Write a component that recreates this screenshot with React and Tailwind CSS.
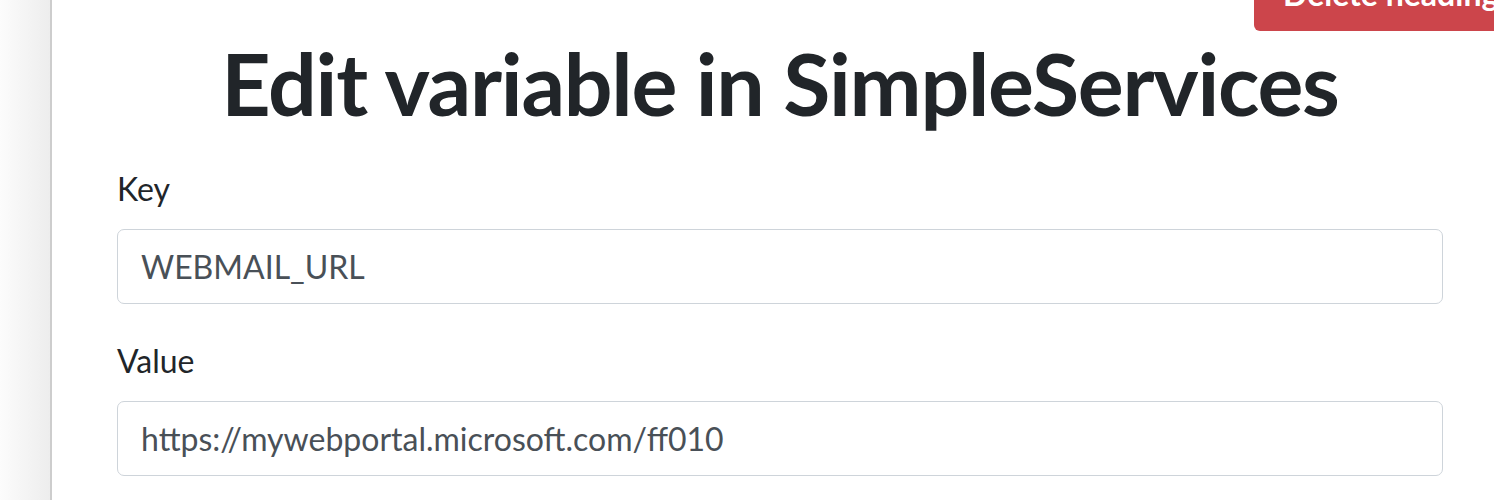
import React from "react";

export default function App() {
  return (
    <div className="flex w-[1494px] h-[500px] overflow-hidden bg-white" style={{ fontFamily: "Lato, 'Noto Sans', sans-serif" }}>
      <div className="w-[52px] shrink-0 bg-gradient-to-r from-[#fcfcfc] to-[#ededed] border-r-2 border-[#cdcdcd]" />
      <main className="flex-1 min-w-0 pl-[65px] pr-[51px] text-[#212529]">
        <div className="flex items-end h-[31px]">
          <button className="ml-[1137px] shrink-0 bg-[#cc454b] text-white font-bold text-[32px] leading-none whitespace-nowrap rounded-[6px] pl-[29px] pr-[29px] pt-[20px] pb-[21px]">
            Delete heading
          </button>
        </div>
        <h1 className="mt-0 text-center font-bold text-[86px] leading-[1.2] tracking-[-1.25px]">Edit variable in SimpleServices</h1>
        <div className="mt-[31px]">
          <label className="block text-[32px] leading-[1.5] mb-[16px]">Key</label>
          <div className="h-[75px] border border-[#ced4da] rounded-[7px] flex items-center pl-[23px] text-[32px] text-[#495057]">
            WEBMAIL_URL
          </div>
        </div>
        <div className="mt-[33px]">
          <label className="block text-[32px] leading-[1.5] mb-[16px]">Value</label>
          <div className="h-[75px] border border-[#ced4da] rounded-[7px] flex items-center pl-[23px] text-[32px] text-[#495057]">
            https://mywebportal.microsoft.com/ff010
          </div>
        </div>
      </main>
    </div>
  );
}
